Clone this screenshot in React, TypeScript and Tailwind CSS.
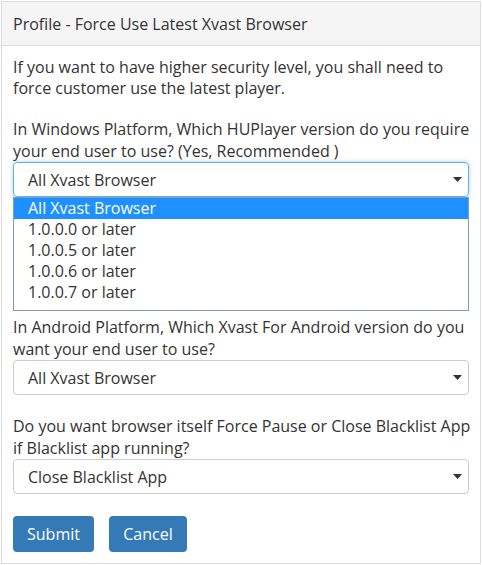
import React from 'react';

const options = ['All Xvast Browser', '1.0.0.0 or later', '1.0.0.5 or later', '1.0.0.6 or later', '1.0.0.7 or later'];

function Caret() {
  return (
    <svg width="9" height="5" viewBox="0 0 9 5" className="shrink-0">
      <path d="M0 0H9L4.5 5Z" fill="#333" />
    </svg>
  );
}

function Select({ value, focused }: { value: string; focused?: boolean }) {
  return (
    <div
      className={
        focused
          ? 'flex h-[35px] items-center justify-between rounded-[4px] border border-[#66afe9] pl-[14px] pr-[6px] shadow-[0_0_4px_rgba(102,175,233,0.6)]'
          : 'flex h-[35px] items-center justify-between rounded-[4px] border border-[#ccc] pl-[14px] pr-[6px]'
      }
    >
      <span>{value}</span>
      <Caret />
    </div>
  );
}

export default function App() {
  return (
    <div
      className="h-[565px] w-[482px] bg-white p-px text-[16px] text-[#333]"
      style={{ fontFamily: '"Open Sans", "Noto Sans", sans-serif' }}
    >
      <div className="h-[563px] w-[480px] border border-[#ddd]">
        <div className="flex h-[44px] items-center border-b border-[#ddd] bg-[#f5f5f5] px-[11px]">
          Profile - Force Use Latest Xvast Browser
        </div>

        <div className="px-[11px] pt-[11px]">
          <p className="whitespace-nowrap leading-[21px]">
            If you want to have higher security level, you shall need to
            <br />
            force customer use the latest player.
          </p>

          <p className="mt-[20px] whitespace-nowrap leading-[21.5px]">
            In Windows Platform, Which HUPlayer version do you require
            <br />
            your end user to use? (Yes, Recommended )
          </p>
          <Select value="All Xvast Browser" focused />
          <div className="border border-[#7f9db9] pb-[7px]">
            {options.map((o, i) => (
              <div
                key={o}
                className={
                  i === 0
                    ? 'h-[21px] bg-[#1e90ff] pl-[14px] leading-[21px] text-white'
                    : 'h-[21px] pl-[14px] leading-[21px]'
                }
              >
                {o}
              </div>
            ))}
          </div>

          <p className="mt-[6px] whitespace-nowrap leading-[21.5px]">
            In Android Platform, Which Xvast For Android version do you
            <br />
            want your end user to use?
          </p>
          <Select value="All Xvast Browser" />

          <p className="mt-[21px] whitespace-nowrap leading-[21.5px]">
            Do you want browser itself Force Pause or Close Blacklist App
            <br />
            if Blacklist app running?
          </p>
          <Select value="Close Blacklist App" />

          <div className="mt-[22px] flex gap-[15px]">
            <button className="h-[36px] w-[81px] rounded-[4px] bg-[#337ab7] text-white">Submit</button>
            <button className="h-[36px] w-[78px] rounded-[4px] bg-[#337ab7] text-white">Cancel</button>
          </div>
        </div>
      </div>
    </div>
  );
}
